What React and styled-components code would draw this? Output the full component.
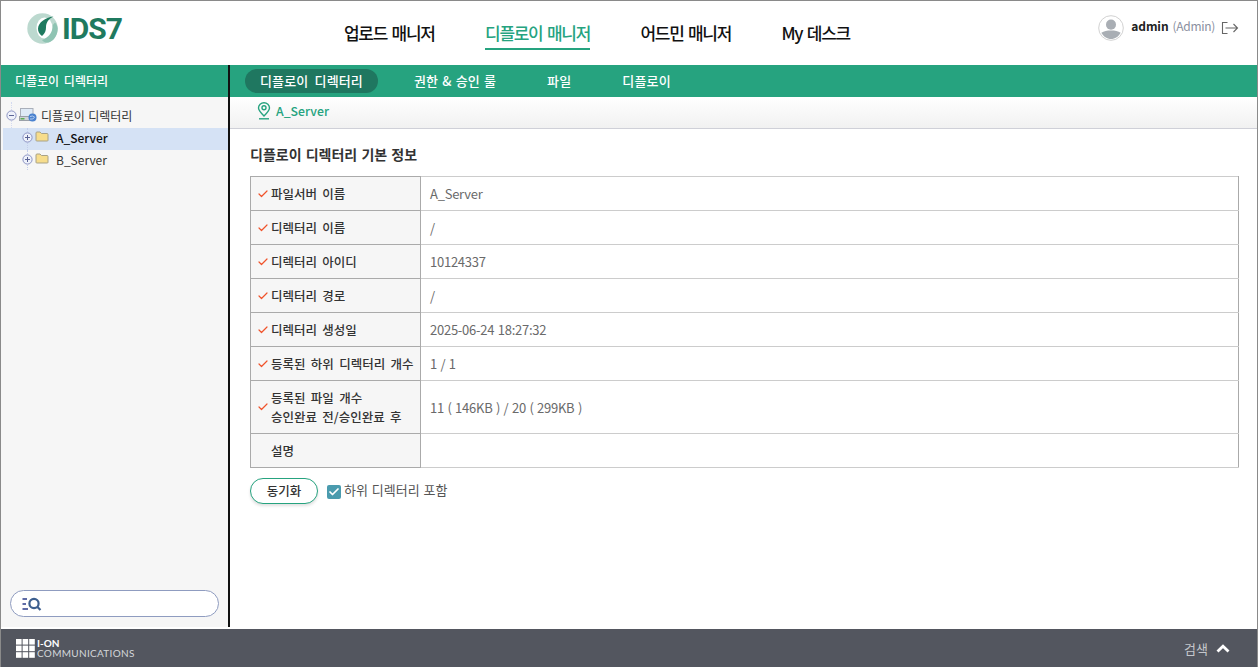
import React from 'react';
import styled, { createGlobalStyle } from 'styled-components';
import { Check } from 'lucide-react';

const Global = createGlobalStyle`
	html, body, #root { margin: 0; padding: 0; height: 100%; }
	body { font-family: 'Noto Sans CJK KR', 'Noto Sans', sans-serif; background: #fff; overflow: hidden; }
	* { box-sizing: border-box; }
`;

const rows = [
	{ label: ['파일서버 이름'], value: 'A_Server' },
	{ label: ['디렉터리 이름'], value: '/' },
	{ label: ['디렉터리 아이디'], value: '10124337' },
	{ label: ['디렉터리 경로'], value: '/' },
	{ label: ['디렉터리 생성일'], value: '2025-06-24 18:27:32' },
	{ label: ['등록된 하위 디렉터리 개수'], value: '1 / 1' },
	{ label: ['등록된 파일 개수', '승인완료 전/승인완료 후'], value: '11 ( 146KB ) / 20 ( 299KB )', tall: true },
	{ label: ['설명'], value: '', plain: true },
];

const LogoMark = () => (
	<svg width="32" height="32" viewBox="0 0 32 32">
		<circle cx="15.5" cy="15.5" r="15.2" fill="#bcd9cf" />
		<ellipse cx="17.5" cy="15" rx="8" ry="10.5" fill="#fff" />
		<path d="M26.5 3.5 C18 4.5 11.5 9.5 11 15.5 C10.8 18.5 12.5 21.5 15 23 C18 20.5 19 17.5 19 14.5 C19 9.5 21.5 6 26.5 3.5 Z" fill="#1f7a5f" />
		<path d="M25.8 12 C25.8 19 22 24.5 15 27 C17 29.5 20 30.3 23 29 C27.5 27 30.7 21.5 30.7 15.5 C30.7 13 29.5 11 28 9.5 Z" fill="#8fc4b3" />
	</svg>
);

const Avatar = () => (
	<svg width="26" height="26" viewBox="0 0 27 27">
		<circle cx="13.5" cy="13.5" r="12.8" fill="#fff" stroke="#cfcfcf" />
		<circle cx="13.5" cy="10" r="5.2" fill="#a9aeb4" />
		<path d="M3.5 18.5 C6 16.5 9.5 16 13.5 16 C17.5 16 21 16.5 23.5 18.5 C21.5 22.5 17.5 25 13.5 25 C9.5 25 5.5 22.5 3.5 18.5 Z" fill="#a9aeb4" />
	</svg>
);

const Logout = () => (
	<svg width="18" height="14" viewBox="0 0 18 14" fill="none" stroke="#666" strokeWidth="1.1">
		<path d="M6.5 1.5 H1.5 V12.5 H6.5" />
		<path d="M4.5 7 H16.5 M12.5 3 L16.5 7 L12.5 11" />
	</svg>
);

const TreeToggle = ({ open }) => (
	<svg width="11" height="11" viewBox="0 0 11 11">
		<circle cx="5.5" cy="5.5" r="4.6" fill="#eef1fa" stroke="#8c94c4" />
		<path d={open ? 'M3 5.5 H8' : 'M3 5.5 H8 M5.5 3 V8'} stroke="#5b6496" fill="none" />
	</svg>
);

const Folder = () => (
	<svg width="14" height="11" viewBox="0 0 14 11">
		<path d="M1 2 Q1 1 2 1 H5 L6.5 2.5 H12 Q13 2.5 13 3.5 V9.5 Q13 10 12 10 H2 Q1 10 1 9.5 Z" fill="#f7dd8c" stroke="#a8a287" />
	</svg>
);

const Drive = () => (
	<svg width="18" height="14" viewBox="0 0 18 14">
		<rect x="1.5" y="0.5" width="12.5" height="8" fill="#dfeaf6" stroke="#a9afba" />
		<rect x="0.5" y="8.5" width="14" height="4" fill="#d0d3d8" stroke="#9aa0a8" />
		<rect x="1.5" y="10" width="4" height="1.5" fill="#5cab55" />
		<circle cx="13.5" cy="9.5" r="4" fill="#4a82cf" />
		<path d="M11 8.5 Q13.5 7 16 9.5 M11 11 Q13.5 11.5 15 10" stroke="#cfe0f7" fill="none" strokeWidth="0.8" />
	</svg>
);

const Pin = () => (
	<svg width="16" height="18" viewBox="0 0 16 18" fill="none" stroke="#26a37f" strokeWidth="1.4">
		<path d="M8 14 C4.5 10.5 2.5 8.5 2.5 6 A5.5 5.3 0 0 1 13.5 6 C13.5 8.5 11.5 10.5 8 14 Z" />
		<circle cx="8" cy="5.8" r="2" />
		<path d="M3 16.8 H13" />
	</svg>
);

const SearchIcon = () => (
	<svg width="20" height="14" viewBox="0 0 20 14" fill="none" stroke="#5f6ba6" strokeWidth="2">
		<path d="M0.5 2 H5 M0.5 7 H4 M0.5 12 H6" />
		<circle cx="12" cy="6.5" r="4.6" stroke="#3d5f8f" strokeWidth="2.2" />
		<path d="M15.5 10 L18.5 13" stroke="#3d5f8f" strokeWidth="2.2" />
	</svg>
);

const FooterMark = () => (
	<svg width="19" height="19" viewBox="0 0 19 19" fill="#fff">
		{[0, 1, 2].map((r) =>
			[0, 1, 2].map((c) => <rect key={`${r}${c}`} x={c * 6.6} y={r * 6.6} width="5.6" height="5.6" />)
		)}
	</svg>
);

const Caret = () => (
	<svg width="14" height="9" viewBox="0 0 14 9" fill="none" stroke="#fff" strokeWidth="2.8">
		<path d="M1.5 7.5 L7 2.2 L12.5 7.5" />
	</svg>
);

const App = () => {
	return (
		<Page>
			<Global />
			<Header>
				<LogoBox>
					<LogoMark />
					<LogoText>IDS7</LogoText>
				</LogoBox>
				<MainNav>
					<MainLink>업로드 매니저</MainLink>
					<MainLink $active>디플로이 매니저</MainLink>
					<MainLink>어드민 매니저</MainLink>
					<MainLink>My 데스크</MainLink>
				</MainNav>
				<UserBox>
					<Avatar />
					<UserName>admin</UserName>
					<UserRole>(Admin)</UserRole>
					<Logout />
				</UserBox>
			</Header>
			<Body>
				<Sidebar>
					<SideTitle>디플로이 디렉터리</SideTitle>
					<Tree>
						<TreeRoot>
							<TreeToggle open />
							<Drive />
							<span>디플로이 디렉터리</span>
						</TreeRoot>
						<TreeItem $selected>
							<TreeToggle />
							<Folder />
							<TreeLabel $selected>A_Server</TreeLabel>
						</TreeItem>
						<TreeItem>
							<TreeToggle />
							<Folder />
							<TreeLabel>B_Server</TreeLabel>
						</TreeItem>
					</Tree>
					<SearchBox><SearchIcon /></SearchBox>
				</Sidebar>
				<Main>
					<TabBar>
						<Tab $active>디플로이 디렉터리</Tab>
						<Tab $tight>권한 &amp; 승인 룰</Tab>
						<Tab>파일</Tab>
						<Tab>디플로이</Tab>
					</TabBar>
					<Crumb>
						<Pin />
						<span>A_Server</span>
					</Crumb>
					<Content>
						<SectionTitle>디플로이 디렉터리 기본 정보</SectionTitle>
						<InfoTable>
							<tbody>
								{rows.map((row) => (
									<Row key={row.label[0]} $tall={row.tall}>
										<LabelCell>
											<LabelInner>
												<Tick>{!row.plain && <Check size={12} strokeWidth={2.4} />}</Tick>
												<div>
													{row.label.map((line) => <LabelLine key={line}>{line}</LabelLine>)}
												</div>
											</LabelInner>
										</LabelCell>
										<ValueCell>{row.value}</ValueCell>
									</Row>
								))}
							</tbody>
						</InfoTable>
						<Actions>
							<SyncButton>동기화</SyncButton>
							<CheckLabel>
								<CheckBox><Check size={12} strokeWidth={3.5} color="#fff" /></CheckBox>
								<span>하위 디렉터리 포함</span>
							</CheckLabel>
						</Actions>
					</Content>
				</Main>
			</Body>
			<Footer>
				<Brand>
					<FooterMark />
					<BrandText>
						<BrandTop>I-ON</BrandTop>
						<BrandBottom>COMMUNICATIONS</BrandBottom>
					</BrandText>
				</Brand>
				<FooterSearch>
					검색
					<Caret />
				</FooterSearch>
			</Footer>
		</Page>
	);
};

const Page = styled.div`
	width: 1258px;
	height: 667px;
	display: flex;
	flex-direction: column;
	border: 1px solid #8a8a8a;
	border-bottom: 0;
	overflow: hidden;
`;

const Header = styled.header`
	height: 64px;
	flex: none;
	display: flex;
	background: #fff;
`;

const LogoBox = styled.div`
	width: 343px;
	flex: none;
	display: flex;
	align-items: flex-start;
	gap: 3px;
	padding: 12px 0 0 26px;
`;

const LogoText = styled.span`
	font-family: 'Roboto', sans-serif;
	font-size: 30px;
	line-height: 32px;
	font-weight: 700;
	letter-spacing: -1px;
	color: #1f7a5f;
`;

const MainNav = styled.nav`
	display: flex;
	gap: 50.5px;
	padding-top: 20px;
	flex: 1;
`;

const MainLink = styled.a`
	height: 29px;
	font-size: 17px;
	line-height: 24px;
	font-weight: 500;
	letter-spacing: -1.3px;
	word-spacing: 2px;
	color: ${(p) => (p.$active ? '#26a37f' : '#111')};
	border-bottom: ${(p) => (p.$active ? '2px solid #26a37f' : '0')};
`;

const UserBox = styled.div`
	display: flex;
	align-items: flex-start;
	padding: 14px 18px 0 0;
	& > svg:last-child { margin: 6px 0 0 6px; }
`;

const UserName = styled.span`
	font-size: 12px;
	line-height: 22px;
	font-weight: 700;
	letter-spacing: -0.1px;
	color: #222;
	margin-left: 7px;
`;

const UserRole = styled.span`
	font-size: 12px;
	line-height: 22px;
	letter-spacing: -0.3px;
	color: #8a8fa0;
	margin-left: 4px;
`;

const Body = styled.div`
	flex: 1;
	display: flex;
	min-height: 0;
`;

const Sidebar = styled.aside`
	width: 229px;
	flex: none;
	display: flex;
	flex-direction: column;
	background: #f6f6f6;
	border-right: 2px solid;
	border-image: linear-gradient(to right, #8a8a8a 50%, #111 50%) 1;
	margin-bottom: 2px;
`;

const SideTitle = styled.div`
	height: 32px;
	flex: none;
	background: #26a37f;
	color: #fff;
	font-size: 12px;
	font-weight: 500;
	word-spacing: 2px;
	line-height: 32px;
	padding-left: 14px;
`;

const Tree = styled.div`
	flex: 1;
	padding: 7px 0 0 2px;
	font-size: 12px;
	color: #333;
	word-spacing: 1px;
`;

const TreeRoot = styled.div`
	position: relative;
	height: 22px;
	margin-bottom: 2px;
	display: flex;
	align-items: center;
	padding-left: 3px;
	gap: 2px;
	& > span { margin-left: 2px; letter-spacing: -0.1px; }
	&::before {
		content: '';
		position: absolute;
		left: 8px;
		top: -2px;
		height: 26px;
		border-left: 1px dotted #d3daf0;
	}
	& > svg { position: relative; }
`;

const TreeItem = styled.div`
	position: relative;
	height: 22px;
	display: flex;
	align-items: center;
	padding: 0 0 3px 19px;
	gap: 2px;
	background: ${(p) => (p.$selected ? '#d5e2f5' : 'transparent')};
	&::before {
		content: '';
		position: absolute;
		left: 24px;
		top: 0;
		height: ${(p) => (p.$selected ? '22px' : '20px')};
		border-left: 1px dotted #c3cdea;
	}
	& > svg { position: relative; }
	& > svg:nth-of-type(2) { margin-top: -3px; }
`;

const TreeLabel = styled.span`
	margin-left: 5px;
	color: ${(p) => (p.$selected ? '#111' : '#333')};
	font-weight: ${(p) => (p.$selected ? 500 : 400)};
`;

const SearchBox = styled.div`
	height: 27px;
	flex: none;
	margin: 0 9px 10px;
	border: 1px solid #8f9cc0;
	border-radius: 14px;
	background: #fff;
	display: flex;
	align-items: center;
	padding-left: 11px;
`;

const Main = styled.main`
	flex: 1;
	min-width: 0;
	display: flex;
	flex-direction: column;
`;

const TabBar = styled.div`
	height: 32px;
	flex: none;
	background: #26a37f;
	display: flex;
	align-items: center;
	padding-left: 15px;
`;

const Tab = styled.a`
	height: 24px;
	padding: ${(p) => (p.$active ? '0 15px' : '0 16px')};
	margin-right: ${(p) => (p.$active ? '20px' : '19px')};
	border-radius: 12px;
	font-size: 13px;
	font-weight: 500;
	word-spacing: ${(p) => (p.$tight ? '1px' : '3px')};
	letter-spacing: 0.15px;
	line-height: 24px;
	color: #fff;
	background: ${(p) => (p.$active ? '#1f7760' : 'transparent')};
`;

const Crumb = styled.div`
	height: 32px;
	flex: none;
	display: flex;
	align-items: center;
	gap: 4px;
	padding: 0 0 3px 26px;
	font-size: 12.3px;
	font-weight: 500;
	color: #26a37f;
	background: linear-gradient(#fff, #f1f1f1);
	border-bottom: 1px solid #cfd0d8;
`;

const Content = styled.div`
	padding: 15px 18px 0 20px;
`;

const SectionTitle = styled.h2`
	margin: 0 0 12px;
	font-size: 14px;
	line-height: 20px;
	font-weight: 700;
	word-spacing: 1px;
	color: #333;
`;

const InfoTable = styled.table`
	width: 100%;
	border-collapse: collapse;
	border: 1px solid #aaa;
	table-layout: fixed;
`;

const Row = styled.tr`
	height: ${(p) => (p.$tall ? '53px' : '34px')};
`;

const LabelCell = styled.td`
	width: 170px;
	padding: 0 0 0 6px;
	background: #f6f6f6;
	border: 1px solid #aaa;
`;

const LabelInner = styled.div`
	display: flex;
	align-items: center;
	gap: 2px;
`;

const Tick = styled.span`
	width: 12px;
	height: 12px;
	flex: none;
	display: flex;
	color: #f0532b;
`;

const LabelLine = styled.div`
	font-size: 12.5px;
	line-height: 19px;
	font-weight: 500;
	word-spacing: 2.5px;
	color: #333;
	white-space: nowrap;
`;

const ValueCell = styled.td`
	padding: 0 0 0 9px;
	border: 1px solid #aaa;
	border-top-color: #ccc;
	border-bottom-color: #ccc;
	font-size: 13px;
	letter-spacing: -0.25px;
	word-spacing: 0.85px;
	color: #6a6a6a;
`;

const Actions = styled.div`
	display: flex;
	align-items: center;
	margin-top: 10px;
`;

const SyncButton = styled.button`
	width: 68px;
	height: 26px;
	padding: 0 0 2px;
	border: 1px solid #26a37f;
	border-radius: 13px;
	background: #fff;
	font-family: inherit;
	font-size: 12.5px;
	font-weight: 500;
	color: #333;
	box-shadow: 0 2px 3px rgba(0, 0, 0, 0.12);
`;

const CheckLabel = styled.label`
	display: flex;
	align-items: center;
	margin-left: 9px;
	font-size: 13px;
	word-spacing: 1px;
	color: #555;
	gap: 3px;
	& > span:last-child { margin-top: -4px; }
`;

const CheckBox = styled.span`
	width: 14px;
	height: 14px;
	border-radius: 2px;
	background: #4a9bae;
	display: flex;
	align-items: center;
	justify-content: center;
	margin-top: 2px;
`;

const Footer = styled.footer`
	height: 38px;
	flex: none;
	margin: 0 -1px;
	background: #53565f;
	display: flex;
	align-items: center;
	justify-content: space-between;
	padding: 0 28px 0 16px;
`;

const Brand = styled.div`
	display: flex;
	align-items: center;
	gap: 2px;
`;

const BrandText = styled.div`
	display: flex;
	flex-direction: column;
	font-family: 'Lato', sans-serif;
`;

const BrandTop = styled.span`
	font-size: 10px;
	line-height: 10px;
	font-weight: 700;
	color: #fff;
`;

const BrandBottom = styled.span`
	font-size: 10px;
	line-height: 11px;
	color: #d4d6da;
	letter-spacing: 0.3px;
`;

const FooterSearch = styled.div`
	display: flex;
	align-items: center;
	gap: 8px;
	font-size: 13px;
	word-spacing: 1px;
	color: #c4c7cc;
`;

export default App;
